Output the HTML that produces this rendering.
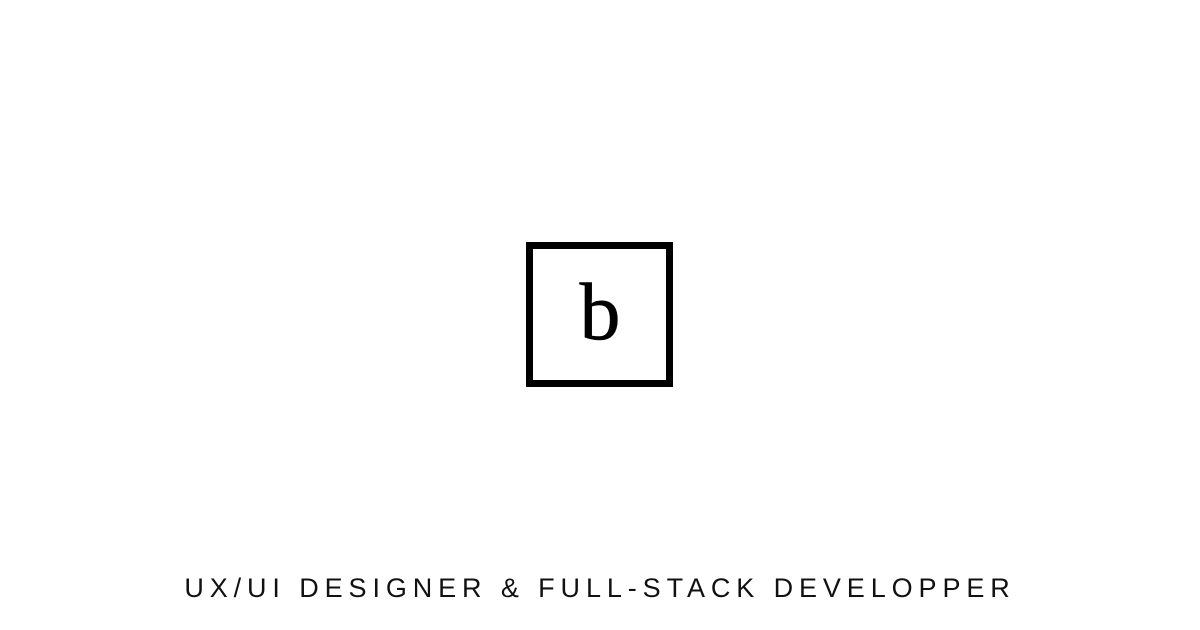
<!DOCTYPE html>
<html><head><style>
html,body{margin:0;padding:0;background:#fff;width:1200px;height:630px;overflow:hidden;position:relative}
.box{position:absolute;left:526px;top:242px;width:133px;height:131px;border:7px solid #000;}
.b{position:absolute;left:0;width:1200px;top:272px;text-align:center;font-family:"Liberation Serif",serif;font-size:82px;line-height:80px;color:#000;-webkit-text-stroke:0.6px #000}
.t{position:absolute;left:0;width:1200px;top:571px;text-align:center;font-family:"Liberation Sans",sans-serif;font-size:27px;line-height:34px;letter-spacing:5.9px;color:#111;font-weight:300;padding-left:0;box-sizing:border-box}
</style></head><body>
<div class="box"></div>
<div class="b">b</div>
<div class="t">UX/UI DESIGNER &amp; FULL-STACK DEVELOPPER</div>
</body></html>
